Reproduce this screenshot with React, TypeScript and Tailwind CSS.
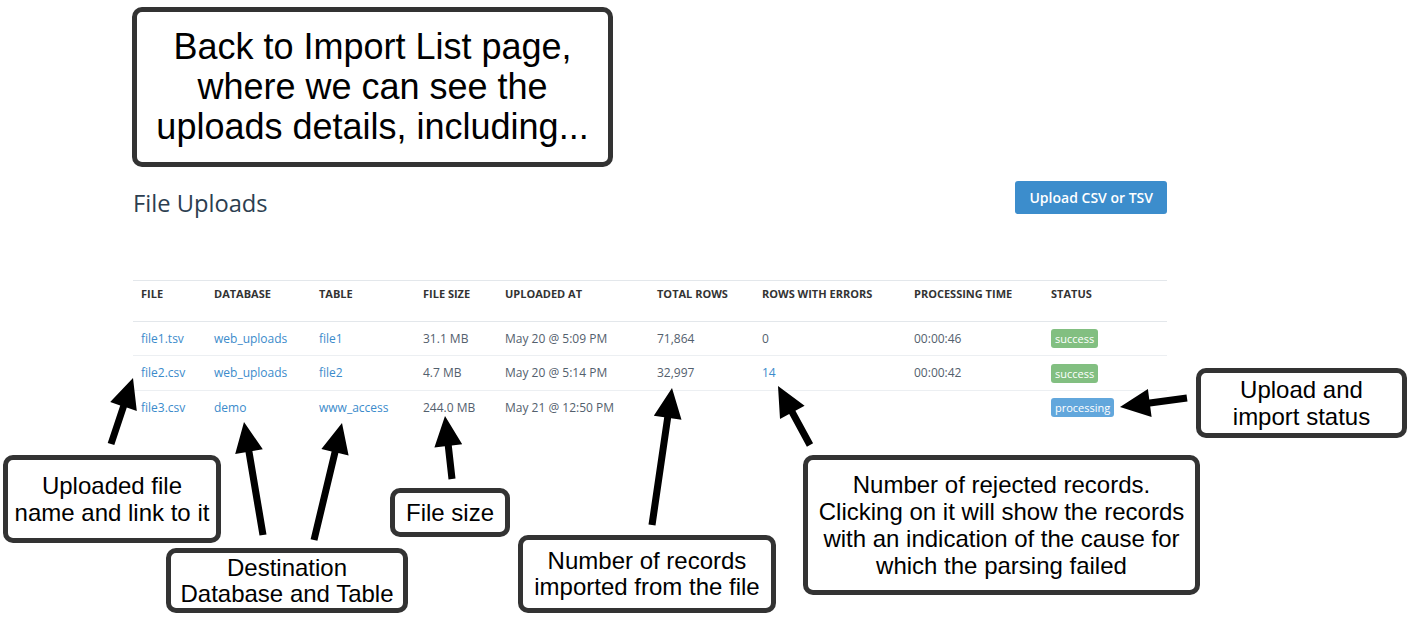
import type { ReactNode } from 'react'

type Upload = {
  file: string
  database: string
  table: string
  size: string
  uploadedAt: string
  totalRows: string
  errors: string
  errorsLink: boolean
  time: string
  status: 'success' | 'processing'
}

const uploads: Upload[] = [
  {
    file: 'file1.tsv',
    database: 'web_uploads',
    table: 'file1',
    size: '31.1 MB',
    uploadedAt: 'May 20 @ 5:09 PM',
    totalRows: '71,864',
    errors: '0',
    errorsLink: false,
    time: '00:00:46',
    status: 'success',
  },
  {
    file: 'file2.csv',
    database: 'web_uploads',
    table: 'file2',
    size: '4.7 MB',
    uploadedAt: 'May 20 @ 5:14 PM',
    totalRows: '32,997',
    errors: '14',
    errorsLink: true,
    time: '00:00:42',
    status: 'success',
  },
  {
    file: 'file3.csv',
    database: 'demo',
    table: 'www_access',
    size: '244.0 MB',
    uploadedAt: 'May 21 @ 12:50 PM',
    totalRows: '',
    errors: '',
    errorsLink: false,
    time: '',
    status: 'processing',
  },
]

const columns = [
  { label: 'File', width: 'w-[73px]' },
  { label: 'Database', width: 'w-[105px]' },
  { label: 'Table', width: 'w-[104px]' },
  { label: 'File size', width: 'w-[82px]' },
  { label: 'Uploaded at', width: 'w-[152px]' },
  { label: 'Total rows', width: 'w-[105px]' },
  { label: 'Rows with errors', width: 'w-[152px]' },
  { label: 'Processing time', width: 'w-[137px]' },
  { label: 'Status', width: 'w-[124px]' },
]

// annotation arrows: [tailX, tailY, tipX, tipY]
const arrows: [number, number, number, number][] = [
  [111, 444, 133, 378],
  [263, 535, 244, 422],
  [314, 540, 342, 423],
  [452, 479, 445, 416],
  [652, 525, 672, 388],
  [810, 445, 778, 386],
  [1187, 398, 1120, 407],
]

function arrowPoints(x1: number, y1: number, x2: number, y2: number) {
  const len = Math.hypot(x2 - x1, y2 - y1)
  const ux = (x2 - x1) / len
  const uy = (y2 - y1) / len
  const nx = -uy
  const ny = ux
  const head = 30
  const half = 14
  const shaft = 3.5
  const bx = x2 - ux * head
  const by = y2 - uy * head
  const pts = [
    [x1 + nx * shaft, y1 + ny * shaft],
    [bx + nx * shaft, by + ny * shaft],
    [bx + nx * half, by + ny * half],
    [x2, y2],
    [bx - nx * half, by - ny * half],
    [bx - nx * shaft, by - ny * shaft],
    [x1 - nx * shaft, y1 - ny * shaft],
  ]
  return pts.map(([x, y]) => `${x.toFixed(1)},${y.toFixed(1)}`).join(' ')
}

function Callout({ className, children }: { className: string; children: ReactNode }) {
  return (
    <div
      className={`absolute flex items-center justify-center rounded-[10px] border-[5px] border-[#333333] bg-white text-center text-black font-['Liberation_Sans',Arial,sans-serif] ${className}`}
    >
      <p>{children}</p>
    </div>
  )
}

function StatusBadge({ status }: { status: Upload['status'] }) {
  const color = status === 'success' ? 'bg-[#82bf81]' : 'bg-[#62a7dc]'
  return (
    <span className={`inline-block rounded-[3px] px-[4px] align-middle text-[11px] leading-[19px] text-white ${color}`}>
      {status}
    </span>
  )
}

export default function App() {
  return (
    <div className="relative h-[632px] w-[1424px] overflow-hidden bg-white font-['Open_Sans',sans-serif]">
      <div className="ml-[133px] w-[1034px] pt-[181px]">
        <div className="flex items-start justify-between">
          <h1 className="mt-[6px] text-[23.7px] leading-[32px] text-[#2c3e50]">File Uploads</h1>
          <button className="h-[33px] rounded-[3px] bg-[#3c8dcc] px-[14px] text-[14px] font-semibold text-white">
            Upload CSV or TSV
          </button>
        </div>

        <table className="mt-[61px] w-full table-fixed border-separate border-spacing-0">
          <thead>
            <tr>
              {columns.map((c) => (
                <th
                  key={c.label}
                  className={`${c.width} border-t border-b border-[#e3e7eb] pt-[5px] pb-[19px] pl-[8px] text-left text-[11px] leading-[16px] font-bold uppercase text-[#333333]`}
                >
                  {c.label}
                </th>
              ))}
            </tr>
          </thead>
          <tbody className="text-[12px] leading-[17px] text-[#53606d]">
            {uploads.map((u, i) => {
              const border = i < uploads.length - 1 ? 'border-b border-[#eceff2]' : ''
              const cell = `py-[8px] pl-[8px] ${border}`
              return (
                <tr key={u.file}>
                  <td className={cell}>
                    <a className="text-[#3b8bcb]">{u.file}</a>
                  </td>
                  <td className={cell}>
                    <a className="text-[#3b8bcb]">{u.database}</a>
                  </td>
                  <td className={cell}>
                    <a className="text-[#3b8bcb]">{u.table}</a>
                  </td>
                  <td className={cell}>{u.size}</td>
                  <td className={cell}>{u.uploadedAt}</td>
                  <td className={cell}>{u.totalRows}</td>
                  <td className={cell}>
                    {u.errorsLink ? <a className="text-[#3b8bcb]">{u.errors}</a> : u.errors}
                  </td>
                  <td className={cell}>{u.time}</td>
                  <td className={`py-[7px] pl-[8px] ${border}`}>
                    <StatusBadge status={u.status} />
                  </td>
                </tr>
              )
            })}
          </tbody>
        </table>
      </div>

      <svg className="pointer-events-none absolute inset-0" width={1424} height={632}>
        {arrows.map(([x1, y1, x2, y2], i) => (
          <polygon key={i} points={arrowPoints(x1, y1, x2, y2)} fill="#000" />
        ))}
      </svg>

      <Callout className="left-[132px] top-[7px] h-[160px] w-[481px] text-[36px] leading-[40px]">
        Back to Import List page,
        <br />
        where we can see the
        <br />
        uploads details, including...
      </Callout>
      <Callout className="left-[3px] top-[455px] h-[88px] w-[218px] text-[24px] leading-[27px]">
        Uploaded file
        <br />
        name and link to it
      </Callout>
      <Callout className="left-[166px] top-[548px] h-[65px] w-[242px] text-[24px] leading-[26px]">
        Destination
        <br />
        Database and Table
      </Callout>
      <Callout className="left-[390px] top-[488px] h-[49px] w-[120px] text-[24px] leading-[27px]">
        File size
      </Callout>
      <Callout className="left-[518px] top-[535px] h-[78px] w-[258px] text-[24px] leading-[26px]">
        Number of records
        <br />
        imported from the file
      </Callout>
      <Callout className="left-[803px] top-[455px] h-[140px] w-[397px] text-[24px] leading-[27px]">
        Number of rejected records.
        <br />
        Clicking on it will show the records
        <br />
        with an indication of the cause for
        <br />
        which the parsing failed
      </Callout>
      <Callout className="left-[1196px] top-[368px] h-[70px] w-[211px] text-[24px] leading-[27px]">
        Upload and
        <br />
        import status
      </Callout>
    </div>
  )
}
